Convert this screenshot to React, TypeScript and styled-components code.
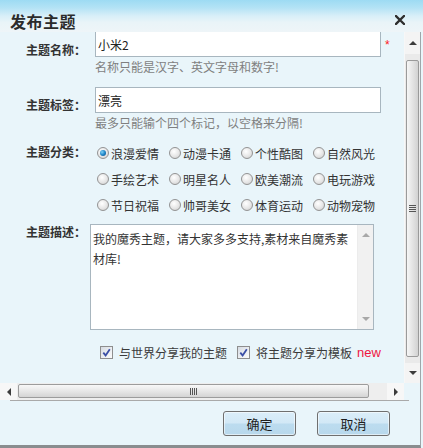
import styled, { createGlobalStyle } from 'styled-components';

const GlobalStyle = createGlobalStyle`
  * { box-sizing: border-box; }
  html, body {
    margin: 0;
    padding: 0;
    background: #e9f5fa;
  }
  body {
    font-family: 'Noto Sans CJK SC', 'Liberation Sans', sans-serif;
    font-size: 12px;
    color: #333333;
    overflow: hidden;
  }
`;

const categories = [
  '浪漫爱情',
  '动漫卡通',
  '个性酷图',
  '自然风光',
  '手绘艺术',
  '明星名人',
  '欧美潮流',
  '电玩游戏',
  '节日祝福',
  '帅哥美女',
  '体育运动',
  '动物宠物',
];

const App = () => {
  return (
    <Dialog>
      <GlobalStyle />
      <TitleBar>
        <Title>发布主题</Title>
        <CloseButton>
          <svg width="10" height="10" viewBox="0 0 10 10">
            <path
              d="M1 1 L9 9 M9 1 L1 9"
              stroke="#2e2e2e"
              strokeWidth="2.3"
              strokeLinecap="square"
            />
          </svg>
        </CloseButton>
      </TitleBar>

      <Body>
        <Viewport>
          <Field $mt={-1}>
            <Label $pt={12}>主题名称：</Label>
            <FieldBody $ml={9}>
              <InputRow>
                <TextInput defaultValue="小米2" />
                <Required>*</Required>
              </InputRow>
              <Hint>名称只能是汉字、英文字母和数字!</Hint>
            </FieldBody>
          </Field>

          <Field $mt={13}>
            <Label $pt={11}>主题标签：</Label>
            <FieldBody $ml={9}>
              <TextInput defaultValue="漂亮" />
              <Hint>最多只能输个四个标记，以空格来分隔!</Hint>
            </FieldBody>
          </Field>

          <Field $mt={10}>
            <Label $pt={5}>主题分类：</Label>
            <FieldBody $ml={11}>
              <RadioGrid>
                {categories.map((name, index) => (
                  <RadioItem key={name}>
                    <Radio $checked={index === 0} />
                    <span>{name}</span>
                  </RadioItem>
                ))}
              </RadioGrid>
            </FieldBody>
          </Field>

          <Field $mt={6}>
            <Label $pt={1}>主题描述：</Label>
            <FieldBody $ml={4}>
              <TextArea>
                <TextAreaText>
                  我的魔秀主题，请大家多多支持,素材来自魔秀素材库!
                </TextAreaText>
                <MiniScroll>
                  <Arrow $dir="up" $color="#a8a8a8" />
                  <Arrow $dir="down" $color="#a8a8a8" />
                </MiniScroll>
              </TextArea>
            </FieldBody>
          </Field>

          <CheckRow>
            <Checkbox>
              <CheckMark />
            </Checkbox>
            <CheckText>与世界分享我的主题</CheckText>
            <Checkbox>
              <CheckMark />
            </Checkbox>
            <CheckText>将主题分享为模板</CheckText>
            <NewTag>new</NewTag>
          </CheckRow>
        </Viewport>

        <VScroll>
          <VArrowBox $h={22}>
            <Arrow $dir="up" />
          </VArrowBox>
          <VTrack>
            <VThumb>
              <Grip $vertical />
            </VThumb>
          </VTrack>
          <VArrowBox $h={20}>
            <Arrow $dir="down" />
          </VArrowBox>
        </VScroll>
      </Body>

      <HScrollRow>
        <HScroll>
          <HArrowBox>
            <Arrow $dir="left" />
          </HArrowBox>
          <HTrack>
            <HThumb>
              <Grip />
            </HThumb>
          </HTrack>
          <HArrowBox>
            <Arrow $dir="right" />
          </HArrowBox>
        </HScroll>
        <Corner />
      </HScrollRow>

      <Footer>
        <FooterLine />
        <ButtonRow>
          <Button>确定</Button>
          <Button>取消</Button>
        </ButtonRow>
      </Footer>
    </Dialog>
  );
};

const CheckMark = () => (
  <svg width="9" height="9" viewBox="0 0 9 9">
    <path
      d="M1.3 4.6 L3.6 7.4 L7.8 1.2"
      fill="none"
      stroke="#3b4fa6"
      strokeWidth="1.8"
    />
  </svg>
);

const Dialog = styled.div`
  width: 423px;
  height: 448px;
  display: flex;
  flex-direction: column;
  overflow: hidden;
  background: #e9f5fa;
`;

const TitleBar = styled.div`
  height: 32px;
  flex-shrink: 0;
  display: flex;
  align-items: flex-start;
  justify-content: space-between;
  padding: 13px 18px 0 10px;
  background: linear-gradient(
    to bottom,
    #9ddbf3 0%,
    #b4e3f5 25%,
    #d8eff8 50%,
    #e9f4f8 70%,
    #eef5f8 100%
  );
`;

const Title = styled.div`
  font-size: 16px;
  line-height: 16px;
  font-weight: bold;
  letter-spacing: 0.5px;
  color: #2b2b2b;
`;

const CloseButton = styled.div`
  width: 10px;
  height: 10px;
  margin-top: 2px;
  display: flex;
`;

const Body = styled.div`
  width: 421px;
  height: 351px;
  flex-shrink: 0;
  display: flex;
  border-right: 1px solid #9ea6aa;
`;

const Viewport = styled.div`
  width: 404px;
  height: 100%;
  overflow: hidden;
`;

const Field = styled.div<{ $mt: number }>`
  display: flex;
  align-items: flex-start;
  margin-top: ${(p) => p.$mt}px;
`;

const Label = styled.div<{ $pt: number }>`
  width: 86px;
  flex-shrink: 0;
  text-align: right;
  font-weight: bold;
  line-height: 14px;
  padding-top: ${(p) => p.$pt}px;
  color: #333333;
`;

const FieldBody = styled.div<{ $ml: number }>`
  margin-left: ${(p) => p.$ml}px;
  display: flex;
  flex-direction: column;
`;

const InputRow = styled.div`
  display: flex;
  align-items: center;
  gap: 4px;
`;

const TextInput = styled.input`
  width: 286px;
  height: 26px;
  margin: 0;
  padding: 0 2px;
  border: 1px solid #a8b6bf;
  background: #ffffff;
  font-family: inherit;
  font-size: 12px;
  color: #222222;
  outline: none;
`;

const Required = styled.span`
  color: #ff1a1a;
  font-family: 'Liberation Sans', sans-serif;
  font-size: 12px;
  line-height: 12px;
  padding-top: 2px;
`;

const Hint = styled.div`
  margin-top: 3px;
  line-height: 14px;
  color: #7f7f7f;
`;

const RadioGrid = styled.div`
  display: grid;
  grid-template-columns: repeat(4, 72px);
  grid-auto-rows: 26px;
`;

const RadioItem = styled.div`
  display: flex;
  align-items: center;
  gap: 2px;
  color: #333333;
  white-space: nowrap;
`;

const Radio = styled.span<{ $checked?: boolean }>`
  width: 12px;
  height: 12px;
  flex-shrink: 0;
  border-radius: 50%;
  border: 1px solid #939393;
  background: radial-gradient(circle at 40% 35%, #ffffff 0%, #e6e6e6 55%, #c9c9c9 100%);
  display: flex;
  align-items: center;
  justify-content: center;

  &::after {
    content: '';
    display: ${(p) => (p.$checked ? 'block' : 'none')};
    width: 6px;
    height: 6px;
    border-radius: 50%;
    background: radial-gradient(circle at 35% 35%, #7fd2f7 0%, #1f86c8 50%, #0b4a84 100%);
  }
`;

const TextArea = styled.div`
  width: 284px;
  height: 106px;
  border: 1px solid #a8b6bf;
  background: #ffffff;
  display: flex;
`;

const TextAreaText = styled.div`
  flex: 1;
  padding: 4px 6px 0 2px;
  line-height: 20px;
  color: #333333;
  word-break: break-all;
`;

const MiniScroll = styled.div`
  width: 16px;
  flex-shrink: 0;
  background: #f1f1f1;
  border-left: 1px solid #ececec;
  display: flex;
  flex-direction: column;
  align-items: center;
  justify-content: space-between;
  padding: 8px 0 8px;
`;

const Arrow = styled.span<{ $dir: 'up' | 'down' | 'left' | 'right'; $color?: string }>`
  width: 0;
  height: 0;
  border-style: solid;
  border-color: transparent;
  ${(p) => {
    const c = p.$color || '#3c3c3c';
    if (p.$dir === 'up') return `border-width: 0 4px 4px 4px; border-bottom-color: ${c};`;
    if (p.$dir === 'down') return `border-width: 4px 4px 0 4px; border-top-color: ${c};`;
    if (p.$dir === 'left') return `border-width: 4px 4px 4px 0; border-right-color: ${c};`;
    return `border-width: 4px 0 4px 4px; border-left-color: ${c};`;
  }}
`;

const CheckRow = styled.div`
  display: flex;
  align-items: center;
  height: 18px;
  margin-top: 13px;
  padding-left: 100px;
`;

const Checkbox = styled.span`
  width: 13px;
  height: 13px;
  flex-shrink: 0;
  border: 1px solid #8e8e8e;
  background: linear-gradient(135deg, #d6dbe2 0%, #eef0f3 60%, #fafafa 100%);
  display: flex;
  align-items: center;
  justify-content: center;
`;

const CheckText = styled.span`
  margin: 0 10px 0 6px;
  color: #3a3a3a;
  white-space: nowrap;
`;

const NewTag = styled.span`
  margin-left: -5px;
  color: #ef1542;
  font-family: 'Liberation Sans', sans-serif;
  font-size: 13px;
`;

const VScroll = styled.div`
  width: 16px;
  flex-shrink: 0;
  display: flex;
  flex-direction: column;
  background: #eeeeee;
  border-left: 1px solid #f7f7f7;
`;

const VArrowBox = styled.div<{ $h: number }>`
  height: ${(p) => p.$h}px;
  flex-shrink: 0;
  display: flex;
  align-items: center;
  justify-content: center;
  background: #f4f4f4;
`;

const VTrack = styled.div`
  flex: 1;
  padding: 6px 1px;
  display: flex;
  background: #eaeaea;
`;

const VThumb = styled.div`
  flex: 1;
  border: 1px solid #9a9a9a;
  border-radius: 2px;
  background: linear-gradient(to right, #f6f6f6 0%, #e6e6e6 45%, #d2d2d2 100%);
  display: flex;
  align-items: center;
  justify-content: center;
`;

const Grip = styled.span<{ $vertical?: boolean }>`
  ${(p) =>
    p.$vertical
      ? `width: 7px; height: 7px;
         background: repeating-linear-gradient(to bottom, #555 0, #555 1px, transparent 1px, transparent 2px);`
      : `width: 7px; height: 7px;
         background: repeating-linear-gradient(to right, #555 0, #555 1px, transparent 1px, transparent 2px);`}
`;

const HScrollRow = styled.div`
  width: 421px;
  height: 17px;
  flex-shrink: 0;
  display: flex;
  border-right: 1px solid #9ea6aa;
`;

const HScroll = styled.div`
  width: 404px;
  display: flex;
  background: #eeeeee;
`;

const HArrowBox = styled.div`
  width: 17px;
  flex-shrink: 0;
  display: flex;
  align-items: center;
  justify-content: center;
  background: #f7f7f7;
`;

const HTrack = styled.div`
  flex: 1;
  padding: 1px 18px 2px 1px;
  display: flex;
`;

const HThumb = styled.div`
  flex: 1;
  border: 1px solid #9c9c9c;
  border-radius: 2px;
  background: linear-gradient(to bottom, #f8f8f8 0%, #e7e7e7 50%, #d4d4d4 100%);
  display: flex;
  align-items: center;
  justify-content: center;
`;

const Corner = styled.div`
  flex: 1;
  background: #e9f5fa;
`;

const Footer = styled.div`
  width: 421px;
  flex: 1;
  border-right: 1px solid #9ea6aa;
  border-bottom: 3px solid #8a8d8f;
  display: flex;
  flex-direction: column;
`;

const FooterLine = styled.div`
  height: 1px;
  margin: 0 11px 0 10px;
  background: #a9a9a9;
`;

const ButtonRow = styled.div`
  display: flex;
  justify-content: flex-end;
  gap: 21px;
  padding: 10px 30px 0 0;
`;

const Button = styled.div`
  width: 73px;
  height: 25px;
  border: 1px solid #6f6f6f;
  border-radius: 3px;
  box-shadow: inset 0 0 0 1px rgba(255, 255, 255, 0.55);
  background: linear-gradient(
    to bottom,
    #dbeef9 0%,
    #d2e8f6 48%,
    #bcdcef 52%,
    #b8d8ec 100%
  );
  display: flex;
  align-items: center;
  justify-content: center;
  font-size: 13px;
  color: #1e1e1e;
`;

export default App;
